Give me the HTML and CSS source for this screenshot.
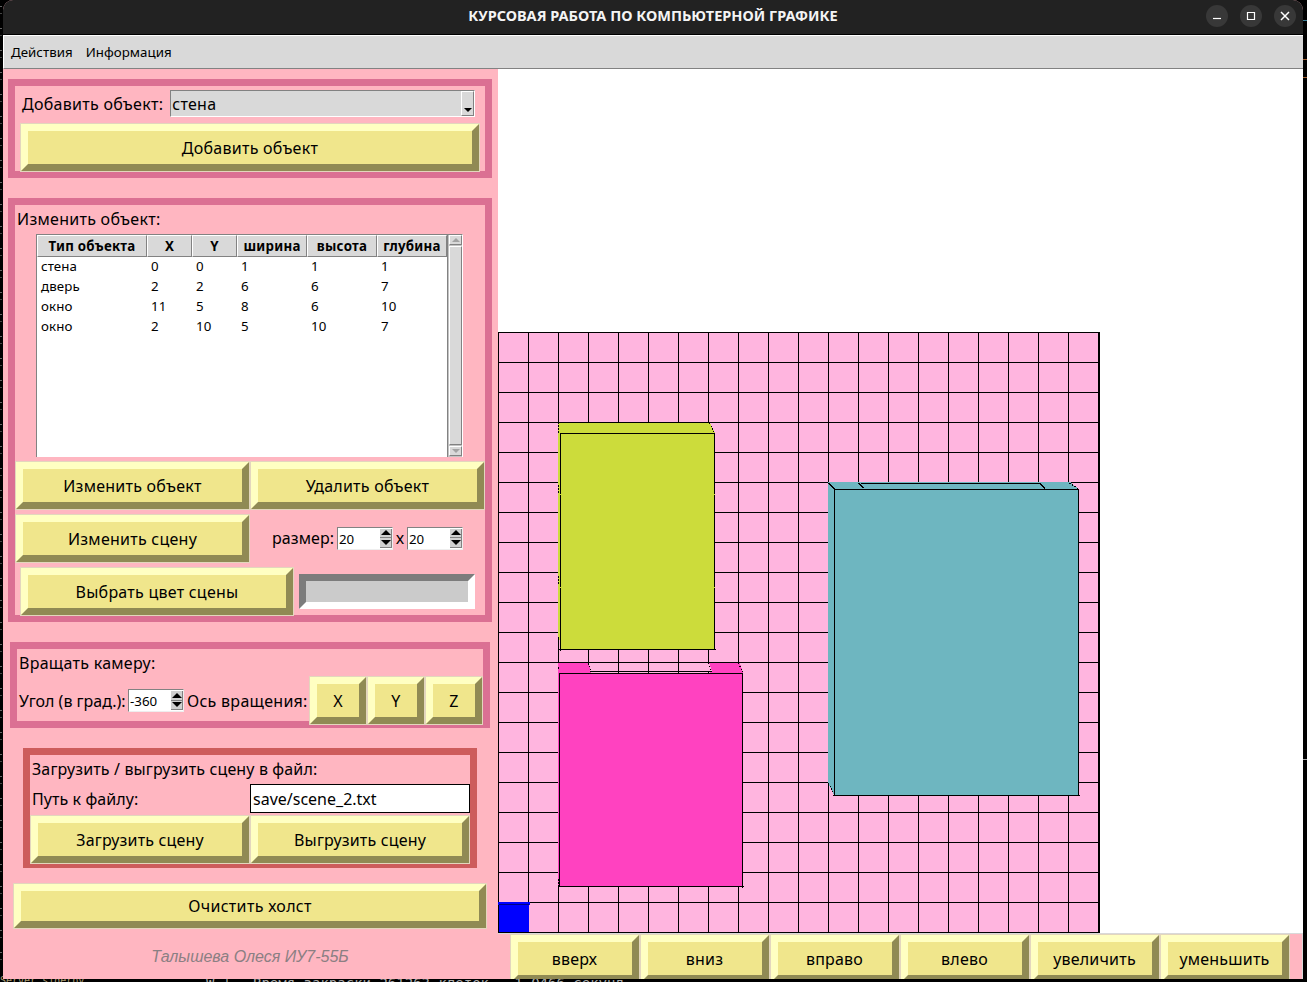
FILE: index.html
```html
<!DOCTYPE html>
<html lang="ru">
<head>
<meta charset="utf-8">
<title>Курсовая работа по компьютерной графике</title>
<link rel="stylesheet" href="styles.css">
</head>
<body>
<div class="terminal">
  <span class="prompt">Server sigerpy</span><span>W&nbsp;|</span><span class="log">Время закраски 261263 клеток - 1.0466 секунд</span>
</div>
<div class="gutter"></div>
<div class="edge"></div>
<div class="window">
  <header class="titlebar">
    <h1 class="title">КУРСОВАЯ РАБОТА ПО КОМПЬЮТЕРНОЙ ГРАФИКЕ</h1>
    <div class="controls">
      <svg class="ctl" viewBox="0 0 22 22"><circle cx="11" cy="11" r="11"/><path d="M7 13.5h8"/></svg>
      <svg class="ctl" viewBox="0 0 22 22"><circle cx="11" cy="11" r="11"/><path d="M7.5 7.5h7v7h-7z"/></svg>
      <svg class="ctl" viewBox="0 0 22 22"><circle cx="11" cy="11" r="11"/><path class="cross" d="M7 7l8 8M15 7l-8 8"/></svg>
    </div>
  </header>
  <nav class="menubar"><span>Действия</span><span>Информация</span></nav>
  <main class="main">
    <aside class="side">
      <section class="panel add">
        <div class="add-row"><label class="wide">Добавить объект:</label>
          <div class="combo"><span class="wide">стена</span><i class="drop"><svg viewBox="0 0 8 4"><path d="M0 0h8L4 4z"/></svg></i></div>
        </div>
        <button class="btn add-btn">Добавить объект</button>
      </section>

      <section class="panel edit">
        <label class="edit-label wide">Изменить объект:</label>
        <div class="table-wrap">
          <div class="table">
            <div class="tr th"><span>Тип объекта</span><span>X</span><span>Y</span><span>ширина</span><span>высота</span><span>глубина</span></div>
            <div class="tr"><span>стена</span><span>0</span><span>0</span><span>1</span><span>1</span><span>1</span></div>
            <div class="tr"><span>дверь</span><span>2</span><span>2</span><span>6</span><span>6</span><span>7</span></div>
            <div class="tr"><span>окно</span><span>11</span><span>5</span><span>8</span><span>6</span><span>10</span></div>
            <div class="tr"><span>окно</span><span>2</span><span>10</span><span>5</span><span>10</span><span>7</span></div>
          </div>
          <div class="scroll">
            <i class="arrow"><svg viewBox="0 0 8 4"><path d="M0 4h8L4 0z"/></svg></i>
            <i class="thumb"></i>
            <i class="arrow"><svg viewBox="0 0 8 4"><path d="M0 0h8L4 4z"/></svg></i>
          </div>
        </div>
        <div class="pair"><button class="btn">Изменить объект</button><button class="btn">Удалить объект</button></div>
        <div class="pair size-row"><button class="btn">Изменить сцену</button>
          <div class="size"><label class="size-label">размер:</label>
            <div class="spin"><span>20</span><i class="steps"><b><svg viewBox="0 0 10 5"><path d="M0 5h10L5 0z"/></svg></b><b><svg viewBox="0 0 10 5"><path d="M0 0h10L5 5z"/></svg></b></i></div>
            <label class="by">x</label>
            <div class="spin"><span>20</span><i class="steps"><b><svg viewBox="0 0 10 5"><path d="M0 5h10L5 0z"/></svg></b><b><svg viewBox="0 0 10 5"><path d="M0 0h10L5 5z"/></svg></b></i></div>
          </div>
        </div>
        <div class="color-row"><button class="btn">Выбрать цвет сцены</button><div class="swatch"></div></div>
      </section>

      <section class="panel camera">
        <label class="cam-label wide">Вращать камеру:</label>
        <div class="cam-row"><label class="angle">Угол (в град.):</label>
          <div class="spin"><span>-360</span><i class="steps"><b><svg viewBox="0 0 10 5"><path d="M0 5h10L5 0z"/></svg></b><b><svg viewBox="0 0 10 5"><path d="M0 0h10L5 5z"/></svg></b></i></div>
          <label class="axis wide">Ось вращения:</label>
          <button class="btn">X</button><button class="btn">Y</button><button class="btn">Z</button>
        </div>
      </section>

      <section class="panel file">
        <label class="file-label">Загрузить / выгрузить сцену в файл:</label>
        <div class="path-row"><label>Путь к файлу:</label><div class="entry">save/scene_2.txt</div></div>
        <div class="pair"><button class="btn">Загрузить сцену</button><button class="btn">Выгрузить сцену</button></div>
      </section>

      <button class="btn clear">Очистить холст</button>
      <p class="author">Талышева Олеся ИУ7-55Б</p>
    </aside>

    <div class="view">
      <svg class="canvas" viewBox="498 69 805 864" shape-rendering="crispEdges">
        <defs>
          <pattern id="grid" x="498" y="332" width="30" height="30" patternUnits="userSpaceOnUse">
            <path class="cell" d="M0 0h30v30H0z"/><path class="ink" d="M0 0h30v1H1v29H0z"/>
          </pattern>
        </defs>
        <path fill="url(#grid)" d="M498 332h601v601H498z"/>
        <path class="ink" d="M1099 332h1v601h-1z"/>

        <path class="green" d="M558 423h152l5 10v217H560v-10h-2z"/>
        <path class="line" d="M560.5 651V433.5H714.5V650M559 649.5h157"/>
        <path class="dots" d="M709.5 423l5 10M558.5 422v12M558.5 485v8M558.5 576v9"/>
        <path class="green" d="M560 494h1v1h-1zM714 494h1v1h-1zM560 587h1v1h-1zM714 587h1v1h-1z"/>
        <path class="line" d="M558.5 637v26"/>

        <path class="pink" d="M558 663h31l2 10h119l-2-10h32l3 9v215H558z"/>
        <path class="cell" d="M590 663h119l3 8H591z"/>
        <path class="line" d="M590 662.5h119M588.5 650v12M618.5 650v21M648.5 650v21M678.5 650v21M589.5 671.5h122M559.5 887V673.5H742.5V888M558 886.5h186"/>
        <path class="dots" d="M588.5 663l2 8M708.5 663l3 8M738.5 663l4 9M558.5 667v3M558.5 879v8"/>

        <path class="teal" d="M828 482h242l9 7v306H834l-6-12z"/>
        <path class="line" d="M834.5 796V489.5H1078.5V796M833 795.5h247M861 483.5h179"/>
        <path class="line bold" d="M828.5 483l6 6M1040 484l5 4"/>
        <path class="line" d="M858.5 483l5 5"/>
        <path class="dots" d="M1069.5 483l9 6M828.5 783l6 12"/>

        <path class="blue" d="M498 902h32v3h-1v27H499v-27h-1z"/>
        <path class="navy" d="M499 904h30v1H499z"/>
      </svg>
      <div class="toolbar">
        <button class="btn">вверх</button><button class="btn">вниз</button><button class="btn">вправо</button><button class="btn">влево</button><button class="btn">увеличить</button><button class="btn">уменьшить</button>
      </div>
    </div>
  </main>
</div>
</body>
</html>
```
FILE: styles.css
```css
* { box-sizing: border-box; }
html { background: #000; }
body { margin: 0; height: 982px; overflow: hidden; position: relative; background: #000; color: #000; font: 16px/22px "Noto Sans", sans-serif; padding-left: 3px; }
label { white-space: pre; }
.wide { letter-spacing: 0.28px; }
i { font-style: normal; }
svg { display: block; }

/* terminal showing behind the window */
.terminal { position: absolute; left: 0; top: 974px; width: 640px; display: grid; grid-template-columns: 206px 47px auto; color: #aaa; font: 14px/18px "DejaVu Sans Mono", monospace; white-space: nowrap; }
.terminal .prompt { font-size: 10px; color: #a99a70; line-height: 14px; }
.gutter { position: absolute; left: 0; top: 0; width: 2px; height: 970px; background: repeating-linear-gradient(#000 0 6px, #666 6px 7px, #000 7px 13px, #444 13px 14px, #000 14px 22px); }
.edge { position: absolute; right: 0; top: 0; width: 4px; height: 982px; background: linear-gradient(#3a7f96, #3a7f96) 0 20px / 4px 1px no-repeat, linear-gradient(#a5602f, #a5602f) 0 59px / 4px 1px no-repeat, linear-gradient(#a5602f, #a5602f) 0 77px / 4px 1px no-repeat, linear-gradient(#aaa, #aaa) 0 759px / 4px 1px no-repeat; }

.window { position: relative; width: 1300px; height: 979px; overflow: hidden; border-radius: 10px 10px 0 0; background: #ffb6c1; display: flex; flex-direction: column; }

.titlebar { height: 35px; flex: none; background: #222; border-bottom: 1px solid #000; display: grid; grid-template-columns: 1fr auto; }
.title { grid-area: 1 / 1 / 2 / 3; margin: 0; padding-top: 4px; text-align: center; color: #f4f4f4; font: bold 14.5px/22px "Noto Sans", sans-serif; }
.controls { grid-area: 1 / 2; display: flex; gap: 12px; padding: 5px 7px 0 0; }
.ctl { width: 22px; height: 22px; fill: #383838; }
.ctl path { fill: none; stroke: #fff; stroke-width: 1.2; }
.ctl .cross { stroke-width: 1.5; }

.menubar { height: 34px; flex: none; background: #d9d9d9; border-top: 1px solid #fff; border-bottom: 1px solid #828282; border-left: 1px solid #fff; display: flex; gap: 13px; padding: 6px 7px; font-size: 13.3px; line-height: 20px; letter-spacing: 0.03px; }

.main { flex: 1; display: flex; min-height: 0; }
.side { width: 495px; flex: none; padding-top: 10px; display: flex; flex-direction: column; align-items: flex-start; }
.panel { border: 7px solid #db7093; flex: none; display: flex; flex-direction: column; }
.panel > * { flex: none; }

.btn { flex: none; height: 47px; margin: 1px; padding: 0; font: 16px/22px "Noto Sans", sans-serif; letter-spacing: 0.25px; color: #000; background: #f0e68c; border: 7px solid; border-color: #ffffc2 #908a54 #908a54 #ffffc2; border-radius: 0; outline: 1px solid #e3d6bd; position: relative; white-space: nowrap; }

.add { margin-left: 5px; width: 484px; height: 99px; }
.add-row { display: flex; padding: 4px 0 0 7px; height: 37px; line-height: 28px; }
.combo { margin-left: 7px; width: 305px; height: 27px; background: #d9d9d9; border: 1px solid; border-color: #828282 #fff #fff #828282; display: flex; justify-content: space-between; padding-left: 1px; line-height: 26px; }
.drop { width: 13px; border: 1px solid; border-color: #fff #828282 #828282 #fff; display: flex; align-items: flex-end; justify-content: center; padding-bottom: 3px; }
.drop svg { width: 8px; height: 4px; }
.add-btn { margin-left: 6px; width: 458px; }

.edit { margin: 20px 0 0 5px; width: 484px; height: 424px; }
.edit-label { height: 29px; padding: 3px 0 0 2px; }
.table-wrap { margin-left: 21px; width: 427px; height: 223px; display: flex; }
.table { width: 412px; background: #fff; border: 1px solid #828282; border-width: 1px 1px 0 1px; }
.tr { display: grid; grid-template-columns: 110px 45px 45px 70px 70px 70px; height: 20px; font-size: 13.3px; line-height: 20px; letter-spacing: 0.1px; }
.tr span { padding-left: 4px; }
.tr.th { height: 21px; font-weight: bold; letter-spacing: 0.25px; }
.th span { padding: 0; text-align: center; background: #d9d9d9; border: 1px solid; border-color: #fff #828282 #828282 #fff; line-height: 20px; white-space: nowrap; }
.scroll { width: 15px; background: #c3c3c3; border-top: 1px solid #828282; border-right: 1px solid #fff; padding: 0 0 1px 1px; display: flex; flex-direction: column; gap: 1px; }
.arrow, .thumb { background: #d9d9d9; border: 1px solid; border-color: #fff #828282 #828282 #fff; }
.arrow { height: 10px; display: flex; align-items: center; justify-content: center; fill: #a3a3a3; }
.arrow svg { width: 8px; height: 4px; }
.thumb { flex: 1; }
.edit .pair { margin-top: 4px; }
.pair { display: flex; }
.pair .btn { width: 233px; }
.size { display: flex; align-items: center; padding: 0 0 1px 22px; }
.size-label { width: 65px; flex: none; letter-spacing: 0.1px; }
.spin { flex: none; width: 56px; height: 23px; background: #fff; border: 1px solid; border-color: #828282 #eee #eee #828282; display: flex; justify-content: space-between; padding: 1px 0 1px 1px; font-size: 13.3px; line-height: 20px; }
.by { width: 14px; text-align: center; }
.steps { width: 12px; display: flex; flex-direction: column; }
.steps b { flex: 1; background: #d0d0d0; border: solid #828282; border-width: 0 1px 1px 0; display: flex; align-items: center; justify-content: center; }
.steps svg { width: 10px; height: 5px; }
.color-row { display: flex; margin-top: 4px; padding-left: 5px; }
.color-row .btn { width: 272px; }
.swatch { width: 176px; height: 35px; margin: 7px 0 0 5px; background: #cbcbcb; border: 7px solid; border-color: #7c7c7c #fff #fff #7c7c7c; }

.camera { margin: 20px 0 0 7px; width: 480px; height: 86px; }
.cam-label { height: 27px; padding: 3px 0 0 2px; }
.cam-row { display: flex; align-items: center; height: 49px; padding-left: 2px; }
.angle { width: 109px; }
.axis { width: 125px; padding-left: 3px; }
.cam-row .btn { width: 56px; }

.file { margin: 20px 0 0 20px; width: 454px; height: 120px; border-color: #cd5c5c; }
.file-label { height: 29px; padding: 3px 0 0 2px; letter-spacing: 0.14px; }
.path-row { display: flex; height: 31px; line-height: 30px; padding-left: 2px; }
.path-row label { width: 218px; letter-spacing: 0.08px; }
.entry { width: 220px; height: 29px; background: #fff; border: 1px solid #000; line-height: 28px; padding-left: 2px; }
.file .pair .btn { width: 218px; letter-spacing: 0.16px; }

.clear { margin: 16px 0 0 11px; width: 472px; height: 44px; letter-spacing: 0.32px; }
.author { margin: 18px 0 0; width: 494px; text-align: center; color: #8b7f83; font: italic 16px/22px "Liberation Sans", sans-serif; }

.view { flex: 1; min-width: 0; border-right: 1px solid #d9d9d9; }
.canvas { width: 805px; height: 864px; background: #fff; }
.cell { fill: #ffb5df; }
.ink { fill: #000; }
.green { fill: #ccdc3b; }
.pink { fill: #ff42c0; }
.teal { fill: #6eb6c0; }
.blue { fill: #00f; }
.navy { fill: #000080; }
.line { fill: none; stroke: #000; }
.bold { stroke-width: 1.6; }
.dots { fill: none; stroke: #000; stroke-dasharray: 1.5 1.5; }
.toolbar { display: flex; padding-left: 12px; border-top: 1px solid #d9d9d9; }
.toolbar .btn { width: 128px; letter-spacing: 0.2px; padding-right: 1px; }
```
